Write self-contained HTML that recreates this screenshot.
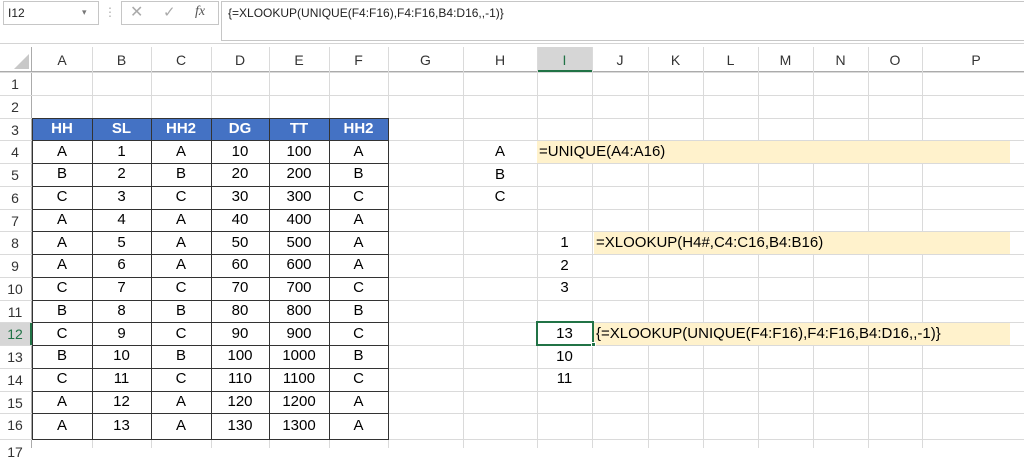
<!DOCTYPE html>
<html><head><meta charset="utf-8"><style>
body{margin:0;width:1024px;height:448px;overflow:hidden;background:#fff;font-family:"Liberation Sans",sans-serif;position:relative}
.a{position:absolute;box-sizing:border-box}
.t{position:absolute;text-align:center;font-size:14px;color:#000;line-height:22px}
</style></head><body>
<div class="a" style="left:0;top:0;width:1024px;height:44px;background:#fff;border-bottom:1px solid #d4d4d4"></div>
<div class="a" style="left:3px;top:1px;width:96px;height:24px;border:1px solid #c6c6c6"></div>
<div class="t" style="left:8px;top:2px;font-size:12px;color:#222;text-align:left">I12</div>
<div class="t" style="left:82px;top:1px;font-size:9px;color:#777">▾</div>
<div class="t" style="left:104px;top:1px;font-size:12px;color:#aaa">⋮</div>
<div class="a" style="left:121px;top:1px;width:98px;height:24px;border:1px solid #c6c6c6"></div>
<div class="t" style="left:130px;top:2px;font-size:16px;color:#aaa">✕</div>
<div class="t" style="left:163px;top:2px;font-size:15px;color:#aaa">✓</div>
<div class="t" style="left:195px;top:1px;font-size:14px;color:#555;font-style:italic;font-family:'Liberation Serif',serif">fx</div>
<div class="a" style="left:221px;top:1px;width:810px;height:40px;border:1px solid #c6c6c6"></div>
<div class="t" style="left:228px;top:2px;font-size:12px;color:#222;text-align:left">{=XLOOKUP(UNIQUE(F4:F16),F4:F16,B4:D16,,-1)}</div>
<div id="g"></div>
<script>
var cols=[32,92,151,211,269,329,388,463,537,592,648,703,758,813,868,922,1030];
var names="ABCDEFGHIJKLMNOP";
var rt=[];for(var i=0;i<16;i++)rt.push(72+i*22.75);rt.push(439);
var h='';
h+='<div class="a" style="left:0;top:47px;width:1024px;height:25px;background:#fff;border-bottom:1px solid #ababab"></div>';
h+='<div class="a" style="left:0;top:47px;width:32px;height:401px;border-right:1px solid #ababab"></div>';
h+='<svg class="a" style="left:10px;top:52px" width="20" height="18"><polygon points="19,2 19,17 4,17" fill="#c8c8c8"/></svg>';
h+='<div class="a" style="left:537px;top:47px;width:55px;height:25px;background:#d6d6d6;border-bottom:2px solid #217346"></div>';
h+='<div class="a" style="left:0;top:'+rt[11]+'px;width:32px;height:22.75px;background:#d6d6d6;border-right:2px solid #217346"></div>';
for(var c=0;c<16;c++){
 h+='<div class="a" style="left:'+cols[c+1]+'px;top:47px;width:1px;height:401px;background:#dadada"></div>';
 h+='<div class="t" style="left:'+cols[c]+'px;top:49px;width:'+(cols[c+1]-cols[c])+'px;font-size:14px;color:'+(c==8?'#217346':'#333')+'">'+names[c]+'</div>';
}
for(var r=0;r<17;r++){
 h+='<div class="a" style="left:0;top:'+rt[r]+'px;width:1024px;height:1px;background:#dadada"></div>';
 if(r<16) h+='<div class="t" style="left:0;top:'+(rt[r]+1)+'px;width:30px;font-size:14px;color:'+(r==11?'#217346':'#333')+'">'+(r+1)+'</div>';
}
h+='<div class="t" style="left:0;top:441px;width:30px;color:#333">17</div>';
var data=[["HH","SL","HH2","DG","TT","HH2"]];
var L=["A","B","C","A","A","A","C","B","C","B","C","A","A"];
for(var i=0;i<13;i++)data.push([L[i],i+1,L[i],(i+1)*10,(i+1)*100,L[i]]);
h+='<div class="a" style="left:32px;top:'+rt[2]+'px;width:356px;height:'+(rt[3]-rt[2])+'px;background:#4472c4"></div>';
for(var r=0;r<14;r++){
 var y=rt[r+2],hh=rt[r+3]-rt[r+2];
 for(var c=0;c<6;c++){
  var x=cols[c],w=cols[c+1]-cols[c];
  h+='<div class="a" style="left:'+x+'px;top:'+y+'px;width:'+(w+1)+'px;height:'+(hh+1)+'px;border:1px solid #333"></div>';
  h+='<div class="t" style="left:'+x+'px;top:'+(y+hh/2-11)+'px;width:'+w+'px;font-size:15px;'+(r==0?'color:#fff;font-weight:bold;':'')+'">'+data[r][c]+'</div>';
 }
}
["A","B","C"].forEach(function(v,i){h+='<div class="t" style="left:463px;top:'+(rt[3+i]+0.5)+'px;width:74px;font-size:15px">'+v+'</div>';});
function yl(x,r,txt){h+='<div class="a" style="left:'+x+'px;top:'+(rt[r]+0.5)+'px;width:'+(1010-x)+'px;height:22px;background:#fff2cc"></div><div class="t" style="left:'+(x+2)+'px;top:'+(rt[r]+0.5)+'px;text-align:left;font-size:15px">'+txt+'</div>';}
yl(537,3,"=UNIQUE(A4:A16)");
yl(594,7,"=XLOOKUP(H4#,C4:C16,B4:B16)");
yl(594,11,"{=XLOOKUP(UNIQUE(F4:F16),F4:F16,B4:D16,,-1)}");
[["1",7],["2",8],["3",9],["13",11],["10",12],["11",13]].forEach(function(a){h+='<div class="t" style="left:537px;top:'+(rt[a[1]]+0.5)+'px;width:55px;font-size:15px">'+a[0]+'</div>';});
h+='<div class="a" style="left:536px;top:'+(rt[11]-1)+'px;width:58px;height:25px;border:2px solid #217346"></div>';
h+='<div class="a" style="left:591px;top:'+(rt[11]+20)+'px;width:5px;height:5px;background:#217346;border:1px solid #fff"></div>';
document.getElementById('g').innerHTML=h;
</script>
</body></html>
